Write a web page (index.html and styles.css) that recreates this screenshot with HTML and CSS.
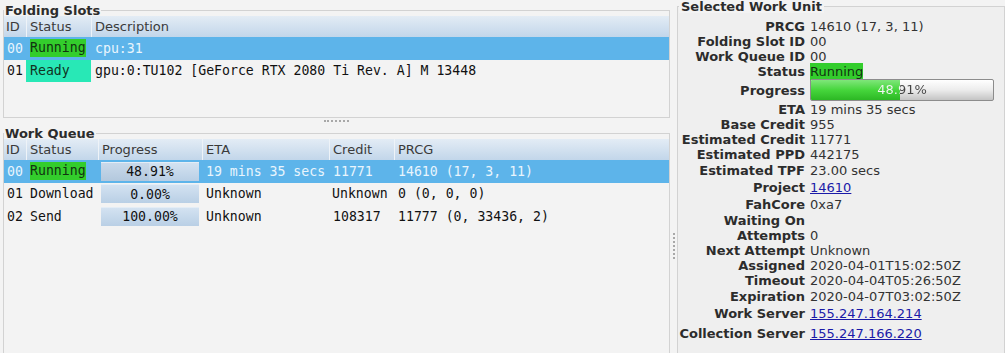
FILE: index.html
```html
<!DOCTYPE html>
<html>
  <head>
    <link rel="stylesheet" href="styles.css">
  </head>
  <body>
    <div id="main">
      <div id="left">
        <fieldset class="frame slots">
          <legend>Folding Slots</legend>
          <div class="tree">
            <div class="row head fs-cols">
              <div class="cell">ID</div>
              <div class="cell sep">Status</div>
              <div class="cell sep">Description</div>
            </div>
            <div class="row sel fs-cols">
              <div class="cell id">00</div>
              <div class="cell"><span class="run">Running</span></div>
              <div class="cell">cpu:31</div>
            </div>
            <div class="row fs-cols">
              <div class="cell id">01</div>
              <div class="cell ready">Ready</div>
              <div class="cell">gpu:0:TU102 [GeForce RTX 2080 Ti Rev. A] M 13448</div>
            </div>
          </div>
        </fieldset>
        <div class="hsplit"><span></span></div>
        <fieldset class="frame queue">
          <legend>Work Queue</legend>
          <div class="tree">
            <div class="row head wq-cols">
              <div class="cell">ID</div>
              <div class="cell sep">Status</div>
              <div class="cell sep">Progress</div>
              <div class="cell sep">ETA</div>
              <div class="cell sep">Credit</div>
              <div class="cell sep">PRCG</div>
            </div>
            <div class="row sel wq-cols">
              <div class="cell id">00</div>
              <div class="cell"><span class="run">Running</span></div>
              <div class="cell"><div class="pbar"><div class="pfill" style="width: 48.91%"></div><span>48.91%</span></div></div>
              <div class="cell">19 mins 35 secs</div>
              <div class="cell">11771</div>
              <div class="cell">14610 (17, 3, 11)</div>
            </div>
            <div class="row wq-cols">
              <div class="cell id">01</div>
              <div class="cell">Download</div>
              <div class="cell"><div class="pbar"><span>0.00%</span></div></div>
              <div class="cell">Unknown</div>
              <div class="cell tight">Unknown</div>
              <div class="cell">0 (0, 0, 0)</div>
            </div>
            <div class="row wq-cols">
              <div class="cell id">02</div>
              <div class="cell">Send</div>
              <div class="cell"><div class="pbar"><span>100.00%</span></div></div>
              <div class="cell">Unknown</div>
              <div class="cell">108317</div>
              <div class="cell">11777 (0, 33436, 2)</div>
            </div>
          </div>
        </fieldset>
      </div>
      <div class="vsplit"><span></span></div>
      <fieldset class="frame unit">
        <legend>Selected Work Unit</legend>
        <div class="info">
          <div class="lbl">PRCG</div><div class="val">14610 (17, 3, 11)</div>
          <div class="lbl">Folding Slot ID</div><div class="val">00</div>
          <div class="lbl">Work Queue ID</div><div class="val">00</div>
          <div class="lbl">Status</div><div class="val"><span class="run">Running</span></div>
          <div class="lbl">Progress</div>
          <div class="val">
            <div class="bigbar">
              <div class="bigfill" style="width: 48.91%"></div>
              <span class="txt">48.91%</span>
            </div>
          </div>
          <div class="lbl">ETA</div><div class="val">19 mins 35 secs</div>
          <div class="lbl">Base Credit</div><div class="val">955</div>
          <div class="lbl">Estimated Credit</div><div class="val">11771</div>
          <div class="lbl">Estimated PPD</div><div class="val">442175</div>
          <div class="lbl">Estimated TPF</div><div class="val">23.00 secs</div>
          <div class="lbl">Project</div><div class="val"><a href="#">14610</a></div>
          <div class="lbl">FahCore</div><div class="val">0xa7</div>
          <div class="lbl">Waiting On</div><div class="val"></div>
          <div class="lbl">Attempts</div><div class="val">0</div>
          <div class="lbl">Next Attempt</div><div class="val">Unknown</div>
          <div class="lbl">Assigned</div><div class="val">2020-04-01T15:02:50Z</div>
          <div class="lbl">Timeout</div><div class="val">2020-04-04T05:26:50Z</div>
          <div class="lbl">Expiration</div><div class="val">2020-04-07T03:02:50Z</div>
          <div class="lbl">Work Server</div><div class="val"><a href="#">155.247.164.214</a></div>
          <div class="lbl">Collection Server</div><div class="val"><a href="#">155.247.166.220</a></div>
        </div>
      </fieldset>
    </div>
  </body>
</html>
```

FILE: styles.css
```css
html {
  height: 100%;
}
body {
  margin: 0;
  height: 100%;
  overflow: hidden;
  background: #f3f3f3;
  font: 13px "DejaVu Sans", sans-serif;
  color: #222;
}
#main {
  display: flex;
  height: 100%;
}
#left {
  width: 667px;
  margin-left: 3px;
  display: flex;
  flex-direction: column;
}
.frame {
  margin: 0;
  padding: 0;
  border: 1px solid #d2d2d2;
  min-width: 0;
}
.frame legend {
  font-weight: bold;
  line-height: 13px;
  padding: 0 1px;
  margin-left: 0;
  color: #2c2c2c;
}
.slots {
  margin-top: 4px;
  height: 112px;
}
.queue {
  flex: 1;
  border-bottom: none;
}
.tree {
  margin-top: -1px;
}
.row {
  display: grid;
  height: 22.5px;
  align-items: center;
  font: 13.2px "DejaVu Sans Mono", monospace;
  color: #111;
}
.fs-cols {
  grid-template-columns: 22px 65px 1fr;
}
.wq-cols {
  grid-template-columns: 22px 72px 104px 127px 65px 1fr;
}
.row.head {
  height: 21px;
  font: 13px "DejaVu Sans", sans-serif;
  color: #3a3a3a;
  background: linear-gradient(#e3ecf5, #c2d6ea);
}
.row.head .cell {
  padding-left: 2px;
}
.row.head .sep {
  border-left: 1px solid #eef3f8;
  padding-left: 3px;
}
.cell {
  height: 100%;
  display: flex;
  align-items: center;
  padding-left: 4px;
  white-space: nowrap;
  overflow: hidden;
}
.cell.id {
  padding-left: 3px;
}
.cell.tight {
  padding-left: 3px;
}
.row.sel {
  background: #5db4ea;
  color: #e9f5fd;
}
.run {
  background: #33cd2c;
  color: #113311;
  padding: 1px 0;
  line-height: 16px;
}
.ready {
  background: #28e8b6;
  color: #113322;
}
.pbar {
  position: relative;
  width: 98px;
  height: 18px;
  margin-left: -1px;
  background: linear-gradient(#d3e2f1, #b9cfe5);
  border-top: 1px solid #e4edf6;
  display: flex;
  align-items: center;
  justify-content: center;
  color: #111;
}
.pfill {
  position: absolute;
  left: 0;
  top: 0;
  bottom: 0;
  background: linear-gradient(#c9d9ea, #b3c8dd);
}
.pbar span {
  position: relative;
}
.hsplit {
  height: 9px;
  display: flex;
  justify-content: center;
  align-items: center;
}
.hsplit span {
  width: 25px;
  border-top: 2px dotted #a8a8a8;
  margin-bottom: 3px;
}
.vsplit {
  width: 7px;
  display: flex;
  align-items: center;
  justify-content: center;
}
.vsplit span {
  height: 26px;
  border-left: 2px dotted #a8a8a8;
  margin-top: 138px;
}
.unit {
  width: 326px;
  background: #efefef;
  border-bottom: none;
}
.unit legend {
  background: #f3f3f3;
  margin-left: 1px;
  padding: 0 2px;
}
.info {
  display: grid;
  grid-template-columns: 127px 1fr;
  grid-template-rows: 16px 15px 15px 15px 22px 16px 15px 15px 15px 16px 18px 17px 15px 15px 15px 15px 15px 16px 18px 22px;
  column-gap: 5px;
  margin-top: 5px;
}
.lbl {
  font-weight: bold;
  text-align: right;
  color: #2c2c2c;
  white-space: nowrap;
  display: flex;
  align-items: center;
  justify-content: flex-end;
}
.val {
  display: flex;
  align-items: center;
  white-space: nowrap;
  color: #333;
}
.val a {
  color: #1a1aa8;
}
.val .run {
  font-size: 13px;
}
.bigbar {
  position: relative;
  width: 182px;
  height: 20px;
  border: 1px solid #8c8c8c;
  border-radius: 2px;
  background: linear-gradient(#ffffff, #ececec 50%, #c4c4c4);
  overflow: hidden;
}
.bigfill {
  position: absolute;
  left: 0;
  top: 0;
  bottom: 0;
  background: linear-gradient(#7fe67a, #46d63c 50%, #2cb824);
}
.bigbar .txt {
  position: relative;
  display: block;
  width: 182px;
  line-height: 20px;
  text-align: center;
  color: transparent;
  background: linear-gradient(to right, #f4f4f4 48.91%, #444 48.91%);
  -webkit-background-clip: text;
  background-clip: text;
}
```
